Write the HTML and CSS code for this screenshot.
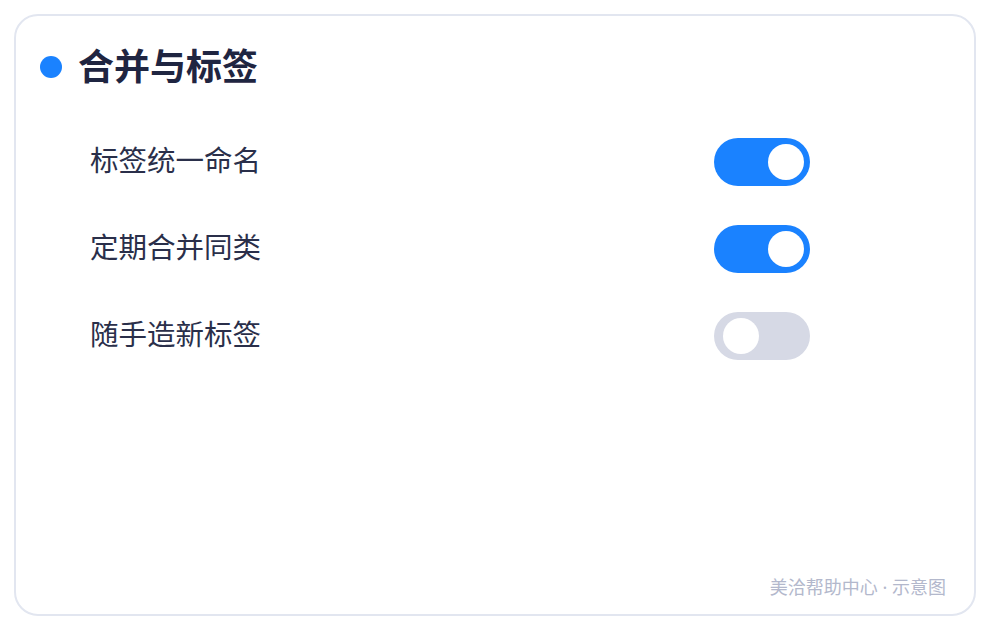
FILE: index.html
```html
<!DOCTYPE html>
<html lang="zh">
<head>
<meta charset="utf-8">
<link rel="stylesheet" href="styles.css">
</head>
<body>
<div class="card">
  <div class="title">
    <span class="dot"></span>
    <h1>合并与标签</h1>
  </div>
  <div class="rows">
    <div class="row"><span class="label">标签统一命名</span><span class="toggle on"><span class="knob"></span></span></div>
    <div class="row"><span class="label">定期合并同类</span><span class="toggle on"><span class="knob"></span></span></div>
    <div class="row"><span class="label">随手造新标签</span><span class="toggle off"><span class="knob"></span></span></div>
  </div>
  <div class="footer">美洽帮助中心 · 示意图</div>
</div>
</body>
</html>
```
FILE: styles.css
```css
html, body { margin: 0; padding: 0; background: #ffffff; }
body {
  padding: 14px;
  font-family: "Noto Sans CJK SC", "Noto Sans", sans-serif;
}
.card {
  box-sizing: border-box;
  height: 602px;
  border: 2px solid #e2e6f0;
  border-radius: 24px;
  background: #fff;
  padding: 24px 28px 15px 24px;
  display: flex;
  flex-direction: column;
}
.title {
  display: flex;
  align-items: center;
  height: 48px;
}
.dot {
  width: 22px;
  height: 22px;
  border-radius: 50%;
  background: #1a82ff;
  margin-right: 16px;
  margin-top: 6px;
  flex: none;
}
.title h1 {
  margin: 0;
  font-size: 36px;
  line-height: 48px;
  font-weight: 700;
  color: #1f2541;
}
.rows {
  margin-top: 50px;
  padding-left: 50px;
  width: 720px;
  display: flex;
  flex-direction: column;
  gap: 39px;
}
.row {
  display: flex;
  align-items: center;
  justify-content: space-between;
  height: 48px;
}
.label {
  font-size: 28.5px;
  color: #2a2f4a;
  line-height: 48px;
  margin-top: -6px;
}
.toggle {
  box-sizing: border-box;
  width: 96px;
  height: 48px;
  border-radius: 24px;
  padding: 6px;
  display: flex;
}
.toggle.on { background: #1a82ff; justify-content: flex-end; }
.toggle.off { background: #d6d9e5; justify-content: flex-start; }
.knob {
  width: 36px;
  height: 36px;
  border-radius: 50%;
  background: #fff;
}
.toggle.off .knob { margin-left: 3px; }
.footer {
  margin-top: auto;
  text-align: right;
  font-family: "Noto Sans", "Noto Sans CJK SC", sans-serif;
  font-size: 18px;
  line-height: 24px;
  color: #b3b8cc;
}
```
